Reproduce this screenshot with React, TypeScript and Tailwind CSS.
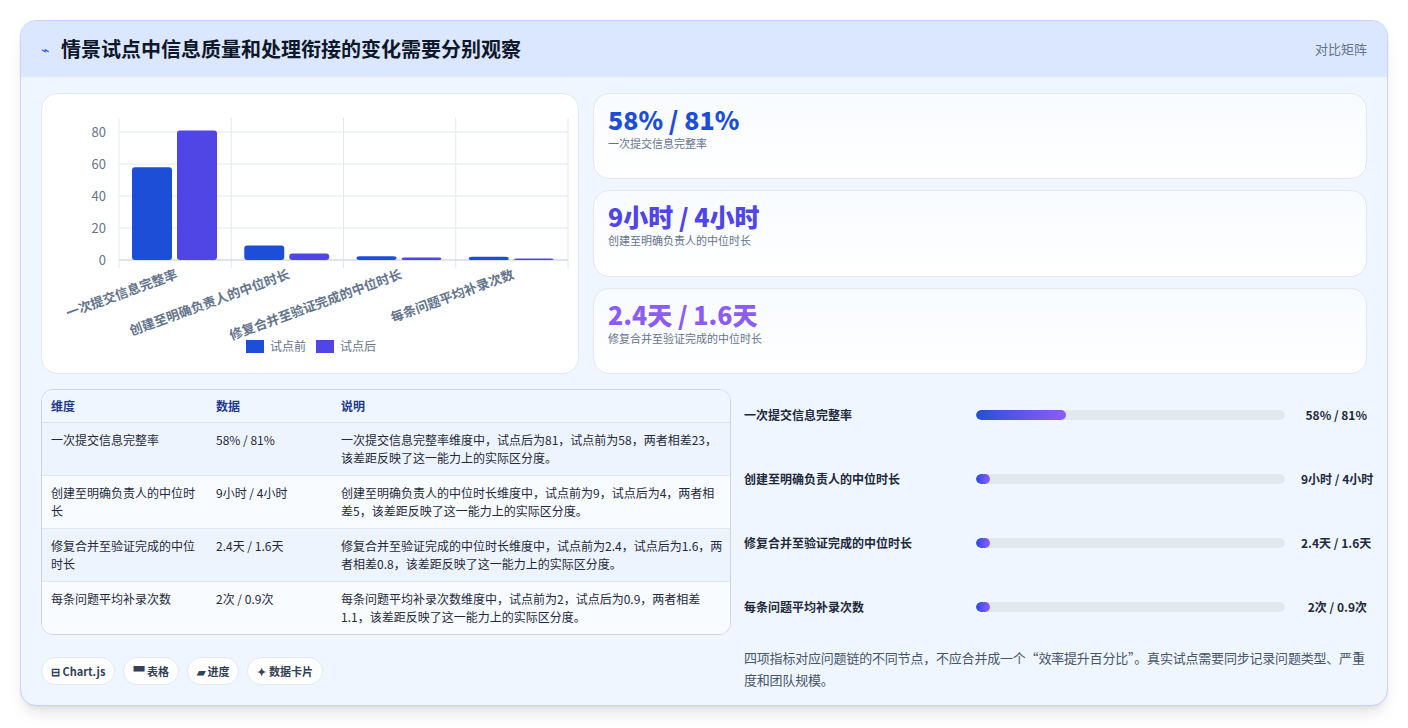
const font = { fontFamily: '"Noto Sans CJK SC", "Noto Sans", sans-serif' }

const groups = [
  { label: '一次提交信息完整率', before: 58, after: 81 },
  { label: '创建至明确负责人的中位时长', before: 9, after: 4 },
  { label: '修复合并至验证完成的中位时长', before: 2.4, after: 1.6 },
  { label: '每条问题平均补录次数', before: 2, after: 0.9 },
]

const stats = [
  { value: '58% / 81%', label: '一次提交信息完整率', color: 'text-[#1d4ed8]' },
  { value: '9小时 / 4小时', label: '创建至明确负责人的中位时长', color: 'text-[#4f46e5]' },
  { value: '2.4天 / 1.6天', label: '修复合并至验证完成的中位时长', color: 'text-[#8b5cf6]' },
]

const rows = [
  { dim: '一次提交信息完整率', data: '58% / 81%', note: '一次提交信息完整率维度中，试点后为81，试点前为58，两者相差23，该差距反映了这一能力上的实际区分度。' },
  { dim: '创建至明确负责人的中位时长', data: '9小时 / 4小时', note: '创建至明确负责人的中位时长维度中，试点前为9，试点后为4，两者相差5，该差距反映了这一能力上的实际区分度。' },
  { dim: '修复合并至验证完成的中位时长', data: '2.4天 / 1.6天', note: '修复合并至验证完成的中位时长维度中，试点前为2.4，试点后为1.6，两者相差0.8，该差距反映了这一能力上的实际区分度。' },
  { dim: '每条问题平均补录次数', data: '2次 / 0.9次', note: '每条问题平均补录次数维度中，试点前为2，试点后为0.9，两者相差1.1，该差距反映了这一能力上的实际区分度。' },
]

const progress = [
  { label: '一次提交信息完整率', value: '58% / 81%', pct: 29 },
  { label: '创建至明确负责人的中位时长', value: '9小时 / 4小时', pct: 4 },
  { label: '修复合并至验证完成的中位时长', value: '2.4天 / 1.6天', pct: 3.5 },
  { label: '每条问题平均补录次数', value: '2次 / 0.9次', pct: 4 },
]

function Chart() {
  const left = 77, right = 526, zero = 166, scale = 1.6
  const cw = (right - left) / 4
  return (
    <svg width="538" height="280" style={font}>
      {[0, 20, 40, 60, 80].map(t => (
        <g key={t}>
          <line x1={left} x2={right} y1={zero - t * scale} y2={zero - t * scale} stroke="#e2e8f0" />
          <text x={64} y={zero - t * scale + 5} textAnchor="end" fontSize="13" fill="#64748b">{t}</text>
        </g>
      ))}
      {[0, 1, 2, 3, 4].map(i => (
        <line key={i} x1={left + cw * i} x2={left + cw * i} y1={24} y2={zero + 8} stroke="#e2e8f0" />
      ))}
      <line x1={left} x2={right} y1={zero} y2={zero} stroke="#cbd5e1" />
      {groups.map((g, i) => {
        const x = left + cw * i
        return (
          <g key={g.label}>
            <rect x={x + 13} y={zero - g.before * scale} width="40" height={g.before * scale} rx="3" fill="#1d4ed8" />
            <rect x={x + 58} y={zero - g.after * scale} width="40" height={g.after * scale} rx="3" fill="#4f46e5" />
            <text transform={`translate(${x + cw / 2 + 3},${184}) rotate(-20)`} textAnchor="end" fontSize="13" fontWeight="700" fill="#64748b">{g.label}</text>
          </g>
        )
      })}
      <rect x="204" y="246" width="18" height="13" fill="#1d4ed8" />
      <text x="228" y="257" fontSize="12" fill="#64748b">试点前</text>
      <rect x="274" y="246" width="18" height="13" fill="#4f46e5" />
      <text x="298" y="257" fontSize="12" fill="#64748b">试点后</text>
    </svg>
  )
}

export default function App() {
  return (
    <div className="min-h-screen bg-white p-5" style={font}>
      <div className="rounded-2xl border border-[#c7d2fe] bg-[#eff6ff] shadow-lg overflow-hidden">
        <div className="h-14 bg-[#dbe7fe] flex items-center justify-between px-5">
          <div className="flex items-center gap-3">
            <span className="text-[#2563eb] text-sm">⌁</span>
            <h1 className="text-[20px] font-bold text-[#0f172a]">情景试点中信息质量和处理衔接的变化需要分别观察</h1>
          </div>
          <span className="text-[13px] text-[#64748b]">对比矩阵</span>
        </div>
        <div className="px-5 pt-[16px] pb-[14px]">
          <div className="grid grid-cols-[538px_1fr] gap-[14px] h-[281px]">
            <div className="rounded-2xl bg-white border border-[#e2e8f0] overflow-hidden">
              <Chart />
            </div>
            <div className="flex flex-col gap-[11px]">
              {stats.map(s => (
                <div key={s.label} className="flex-1 rounded-2xl border border-[#e2e8f0] bg-gradient-to-b from-[#f8fbff] to-white px-[14px] pt-[9px]">
                  <div className={`text-[25px] font-extrabold leading-8 ${s.color}`}>{s.value}</div>
                  <div className="text-[11px] text-[#64748b]">{s.label}</div>
                </div>
              ))}
            </div>
          </div>
          <div className="grid grid-cols-[690px_1fr] gap-[13px] mt-[15px]">
            <div>
              <div className="rounded-xl border border-[#cbd5e1] overflow-hidden bg-white">
                <table className="w-full text-[12px] text-[#1e293b]">
                  <thead>
                    <tr className="bg-[#eff6ff] border-b border-[#dbe3ef] text-left text-[#1e3a8a]">
                      <th className="h-8 pl-[9px] w-[174px] font-bold">维度</th>
                      <th className="w-[125px] font-bold">数据</th>
                      <th className="font-bold">说明</th>
                    </tr>
                  </thead>
                  <tbody>
                    {rows.map((r, i) => (
                      <tr key={r.dim} className={`${i % 2 === 0 ? 'bg-[#eef4fd]' : 'bg-[#f8fbff]'} ${i < 3 ? 'border-b border-[#e2e8f0]' : ''} align-top`}>
                        <td className="pl-[9px] pr-3 py-[8px] leading-[18px] h-[53px]">{r.dim}</td>
                        <td className="py-[8px] leading-[18px]">{r.data}</td>
                        <td className="py-[8px] pr-1 leading-[18px]">{r.note}</td>
                      </tr>
                    ))}
                  </tbody>
                </table>
              </div>
              <div className="flex gap-2 mt-[22px]">
                {['⊟ Chart.js', '▀ 表格', '▰ 进度', '✦ 数据卡片'].map(c => (
                  <span key={c} className="rounded-full bg-white border border-[#e2e8f0] px-[9px] h-[28px] flex items-center text-[11px] font-bold text-[#334155]">{c}</span>
                ))}
              </div>
            </div>
            <div className="flex flex-col -mt-[6px]">
              <div className="flex flex-col">
                {progress.map(p => (
                  <div key={p.label} className="h-16 flex items-center gap-4 text-[12px] font-bold text-[#1e293b]">
                    <span className="w-[216px] shrink-0 whitespace-nowrap">{p.label}</span>
                    <div className="flex-1 h-[10px] rounded-full bg-[#e2e8f0] overflow-hidden">
                      <div className="h-full rounded-full bg-gradient-to-r from-[#1d4ed8] to-[#8b5cf6] min-w-[14px]" style={{ width: `${p.pct}%` }} />
                    </div>
                    <span className="whitespace-nowrap w-[66px] text-right">{p.value}</span>
                  </div>
                ))}
              </div>
              <p className="text-[13px] leading-[22px] text-[#475569] mt-[8px] tracking-[-0.2px]">四项指标对应问题链的不同节点，不应合并成一个“效率提升百分比”。真实试点需要同步记录问题类型、严重度和团队规模。</p>
            </div>
          </div>
        </div>
      </div>
    </div>
  )
}
